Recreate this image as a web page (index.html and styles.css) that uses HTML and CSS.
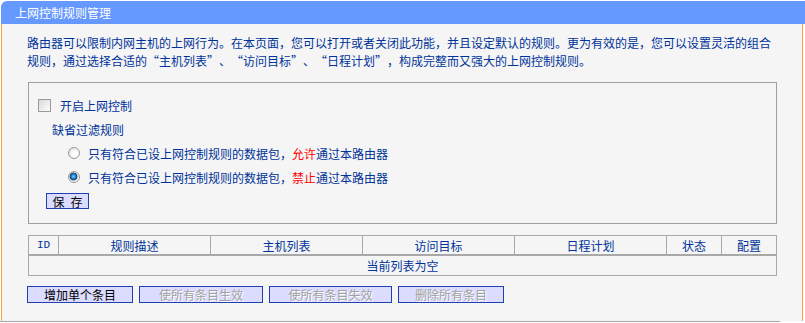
FILE: index.html
```html
<!DOCTYPE html>
<html lang="zh-CN">
<head>
    <meta charset="UTF-8">
    <title>上网控制规则管理</title>
    <link rel="stylesheet" href="styles.css">
</head>
<body>
<div class="panel">
    <div class="panel-title">上网控制规则管理</div>
    <div class="panel-body">
        <p class="intro">路由器可以限制内网主机的上网行为。在本页面，您可以打开或者关闭此功能，并且设定默认的规则。更为有效的是，您可以设置灵活的组合规则，通过选择合适的“主机列表”、“访问目标”、“日程计划”，构成完整而又强大的上网控制规则。</p>

        <div class="settings">
            <div class="row">
                <input type="checkbox" id="enableCtrl" class="check">
                <label for="enableCtrl" class="check-label">开启上网控制</label>
            </div>
            <div class="row row-sub">缺省过滤规则</div>
            <div class="row row-radio">
                <input type="radio" name="defRule" id="ruleAllow" class="radio">
                <label for="ruleAllow">只有符合已设上网控制规则的数据包，<span class="warn">允许</span>通过本路由器</label>
            </div>
            <div class="row row-radio">
                <input type="radio" name="defRule" id="ruleDeny" class="radio" checked>
                <label for="ruleDeny">只有符合已设上网控制规则的数据包，<span class="warn">禁止</span>通过本路由器</label>
            </div>
            <div class="save-row">
                <button type="button" class="btn btn-save">保&ensp;存</button>
            </div>
        </div>

        <table class="rules">
            <thead>
            <tr>
                <th class="col-id">ID</th>
                <th class="col-wide">规则描述</th>
                <th class="col-wide">主机列表</th>
                <th class="col-wide">访问目标</th>
                <th class="col-wide">日程计划</th>
                <th class="col-small">状态</th>
                <th>配置</th>
            </tr>
            </thead>
            <tbody>
            <tr>
                <td colspan="7">当前列表为空</td>
            </tr>
            </tbody>
        </table>

        <div class="actions">
            <button type="button" class="btn btn-add">增加单个条目</button>
            <button type="button" class="btn btn-long" disabled>使所有条目生效</button>
            <button type="button" class="btn btn-long2" disabled>使所有条目失效</button>
            <button type="button" class="btn btn-add" disabled>删除所有条目</button>
        </div>
    </div>
    <div class="bottom-line"></div>
</div>
</body>
</html>
```

FILE: styles.css
```css
html, body {
    margin: 0;
    padding: 0;
    background: #ffffff;
    overflow: hidden;
}

body {
    font-family: "Noto Sans CJK SC", "Noto Sans", sans-serif;
    font-size: 12px;
    color: #003399;
}

.panel {
    margin: 1px 0 0 1px;
    width: 802px;
}

.panel-title {
    width: 804px;
    height: 23px;
    line-height: 24px;
    padding-left: 14px;
    box-sizing: border-box;
    background-color: #6699ff;
    border-top-left-radius: 6px;
    color: #ffffff;
}

.panel-body {
    height: 297px;
    box-sizing: border-box;
    padding: 10px 0 0 25px;
    background-color: #f5f5f5;
    border-left: 1px solid #ffa040;
    border-right: 1px solid #ffa040;
}

.bottom-line {
    width: 780px;
    height: 1px;
    margin-left: -1px;
    background-color: #a8a8a8;
}

/* keep every punctuation mark full width, like the old bitmap font */
.intro {
    margin: 0;
    width: 750px;
    line-height: 18px;
    font-variant-east-asian: full-width;
    text-spacing-trim: space-all;
}

.settings {
    width: 749px;
    box-sizing: border-box;
    margin: 12px 0 0 1px;
    padding: 10px 0 14px 9px;
    border: 1px solid #a0a0a0;
}

.row {
    display: flex;
    align-items: center;
    height: 24px;
}

.row-sub {
    padding-left: 14px;
}

.row-radio {
    padding-left: 30px;
}

.check {
    appearance: none;
    width: 13px;
    height: 13px;
    margin: 0 9px 0 0;
    border: 1px solid #9a9a9a;
    box-sizing: border-box;
    background: linear-gradient(135deg, #d8d8d8, #ffffff);
}

.radio {
    appearance: none;
    width: 12px;
    height: 12px;
    margin: 0 8px 0 0;
    border: 1px solid #9c9c9c;
    border-radius: 50%;
    box-sizing: border-box;
    background: radial-gradient(circle at 60% 60%, #ffffff 30%, #d0d0d0 100%);
}

.radio:checked {
    background: radial-gradient(circle at 45% 45%, #7fd0ff 0, #1a7fc8 30%, #0a3c70 45%, #e8e8e8 55%, #ffffff 100%);
}

.warn {
    color: #ff0000;
}

.save-row {
    display: flex;
    margin-top: 4px;
    padding-left: 8px;
}

.btn {
    height: 17px;
    padding: 0;
    margin: 0;
    font-family: "Noto Sans CJK SC", "Noto Sans", sans-serif;
    font-size: 12px;
    line-height: 15px;
    color: #000000;
    background-color: #dcdcff;
    border: 1px solid #1f40b0;
    box-sizing: border-box;
    cursor: pointer;
}

.btn:disabled {
    color: #a0a0a0;
    text-shadow: 1px 1px 0 #ffffff;
    cursor: default;
}

.btn-save {
    width: 43px;
    height: 16px;
}

.rules {
    width: 749px;
    margin: 11px 0 0 1px;
    border-collapse: collapse;
    table-layout: fixed;
}

.rules th,
.rules td {
    border: 1px solid #a8a8a8;
    padding: 0;
    font-weight: normal;
    text-align: center;
    color: #003399;
}

.rules th {
    height: 18px;
    border-bottom-width: 2px;
}

.rules td {
    height: 19px;
}

.col-id {
    width: 29px;
    font-family: "Liberation Mono", monospace;
    font-size: 11px;
}

.col-wide {
    width: 151px;
}

.col-small {
    width: 54px;
}

.actions {
    display: flex;
    gap: 6px;
    margin-top: 10px;
}

.btn-add {
    width: 106px;
}

.btn-long {
    width: 124px;
}

.btn-long2 {
    width: 123px;
}
```
